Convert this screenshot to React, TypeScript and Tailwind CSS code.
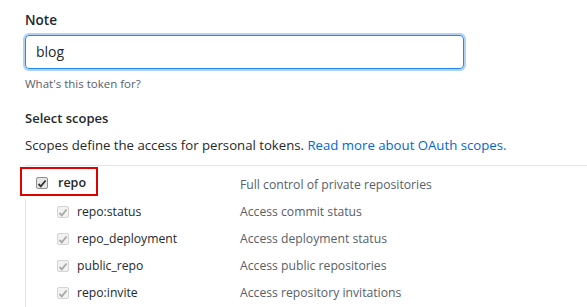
import React from "react";

function Check({ disabled }: { disabled?: boolean }) {
  return (
    <span
      className={
        "flex h-[12px] w-[12px] shrink-0 items-center justify-center rounded-[2px] border " +
        (disabled ? "border-[#d4d4d4] bg-[#f2f2f2]" : "border-[#8f8f8f] bg-[#e6e6e6]")
      }
    >
      <svg width="10" height="9" viewBox="0 0 10 9">
        <path
          d="M1.5 5 L3.8 7.3 L8.6 1.5"
          fill="none"
          stroke={disabled ? "#a8a8a8" : "#333333"}
          strokeWidth="1.8"
        />
      </svg>
    </span>
  );
}

const subs = [
  ["repo:status", "Access commit status"],
  ["repo_deployment", "Access deployment status"],
  ["public_repo", "Access public repositories"],
  ["repo:invite", "Access repository invitations"],
];

export default function App() {
  return (
    <div
      className="h-[307px] w-[587px] overflow-hidden bg-white pl-[25px] pt-[10px] text-[14px] text-[#24292e]"
      style={{ fontFamily: '"Open Sans", "Noto Sans", sans-serif' }}
    >
      <div className="h-[20px] text-[13.5px] font-semibold leading-[20px]">Note</div>
      <div className="mt-[5px] w-[439px] rounded-[4px] border border-[#2188ff] px-[10px] py-[7px] text-[14px] leading-[18px] shadow-[0_0_0_2px_rgba(3,102,214,0.3)]">
        blog
      </div>
      <div className="mt-[7px] text-[11.5px] leading-[16px] text-[#586069]">What's this token for?</div>
      <div className="mt-[16px] text-[13px] font-semibold leading-[20px]">Select scopes</div>
      <div className="mt-[7px] text-[13.2px] leading-[20px]">
        Scopes define the access for personal tokens.{" "}
        <span className="text-[#0366d6]">Read more about OAuth scopes.</span>
      </div>
      <div className="mt-[10px] border-t border-[#e1e4e8]">
        <div className="flex h-[33px] items-start">
          <div className="w-[215px]">
            <div className="-ml-[5px] mt-[1px] flex h-[29px] w-[78px] items-center gap-[10px] border-2 border-[#e00000] pl-[14px] pt-[3px]">
              <Check />
              <span className="text-[12.5px] font-semibold">repo</span>
            </div>
          </div>
          <div className="pt-[10px] text-[12.2px] leading-[18px] text-[#586069]">Full control of private repositories</div>
        </div>
        <div className="border-l border-[#e1e4e8]">
          {subs.map(([n, d]) => (
            <div key={n} className="flex h-[27px] items-center text-[12.2px]">
              <div className="flex w-[214px] items-center gap-[8px] pl-[31px]">
                <Check disabled />
                <span>{n}</span>
              </div>
              <div className="text-[#586069]">{d}</div>
            </div>
          ))}
        </div>
      </div>
    </div>
  );
}
